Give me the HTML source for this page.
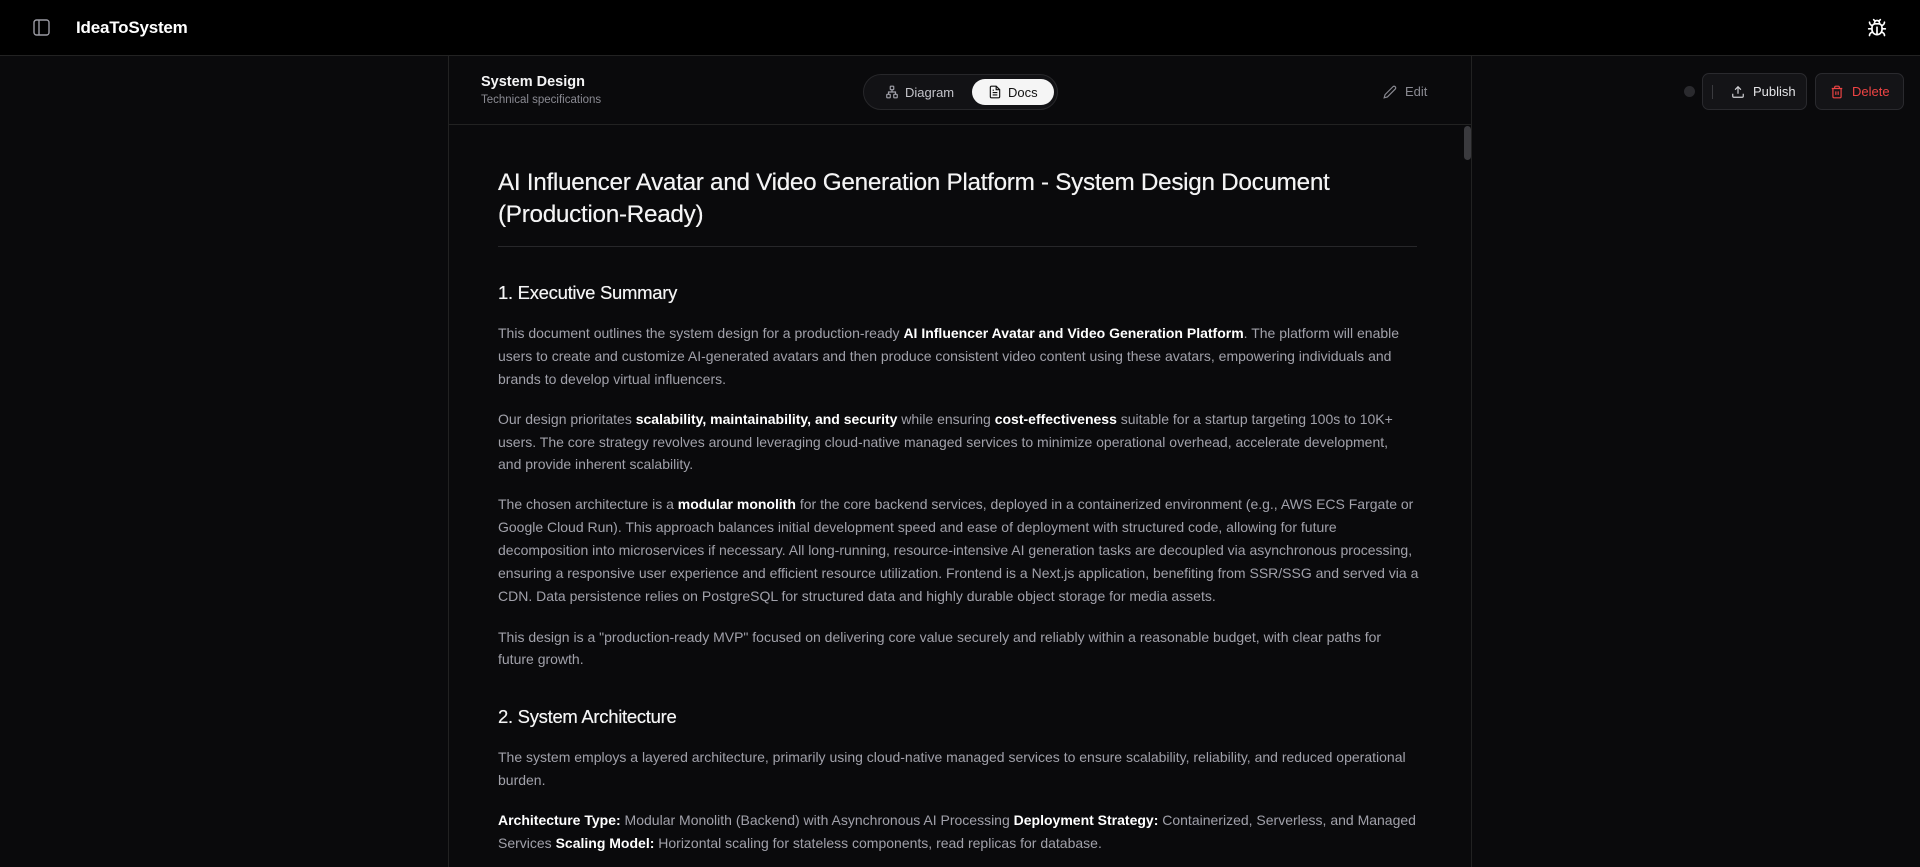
<!DOCTYPE html>
<html><head><meta charset="utf-8"><style>
*{margin:0;padding:0;box-sizing:border-box}
html,body{width:1920px;height:867px;overflow:hidden;background:#0a0a0c;font-family:"Liberation Sans",sans-serif;color:#fafafa}
.top{position:absolute;left:0;top:0;width:1920px;height:56px;background:#000;border-bottom:1px solid #222}
.logo{position:absolute;left:76px;top:18px;font-size:17px;font-weight:bold;color:#fff;letter-spacing:-0.2px}
.panel{position:absolute;left:448px;top:56px;width:1024px;height:811px;border-left:1px solid #222;border-right:1px solid #222;background:#0a0a0c}
.ph{position:absolute;left:0;top:0;width:1022px;height:69px;border-bottom:1px solid #222}
.t{position:absolute;white-space:nowrap}
.l{position:absolute;left:49px;white-space:nowrap;font-size:14px;line-height:23px;color:#a1a1aa}
.l b{color:#fff;font-weight:bold}
h1,h2{position:absolute;left:49px;white-space:nowrap;color:#f4f4f5;font-weight:normal;text-shadow:0 0 0.4px #fff}
h1{font-size:24.3px;line-height:32px;letter-spacing:-0.3px}
h2{font-size:18.5px;line-height:26px;letter-spacing:-0.3px}
.btn{position:absolute;top:73px;height:37px;border:1px solid #2a2a2e;border-radius:7px;background:#141417;font-size:13px;line-height:35px}
</style></head><body>
<div class="top">
<svg style="position:absolute;left:33px;top:19px" width="17" height="17" viewBox="0 0 17 17" fill="none" stroke="#9a9aa2" stroke-width="1.4"><rect x="1" y="1" width="15" height="15" rx="2.5"/><line x1="6" y1="1" x2="6" y2="16"/></svg>
<div class="logo">IdeaToSystem</div>
<svg style="position:absolute;left:1867px;top:18px" width="20" height="20" viewBox="0 0 24 24" fill="none" stroke="#fff" stroke-width="2" stroke-linecap="round"><path d="M8 2l1.9 1.9M16 2l-1.9 1.9M9 7.1V6a3 3 0 016 0v1.1"/><path d="M12 20c-3.3 0-6-2.7-6-6v-3a4 4 0 014-4h4a4 4 0 014 4v3c0 3.3-2.7 6-6 6zM12 20v-9M6.5 9C4.6 8.8 3 7.1 3 5M6 13H2M3 21c0-2.1 1.7-3.9 3.8-4M20.97 5c0 2.1-1.6 3.8-3.5 4M22 13h-4M17.2 17c2.1.1 3.8 1.9 3.8 4"/></svg>
</div>
<div class="panel">
<div class="ph">
<div class="t" style="left:32px;top:18px;font-size:14.5px;font-weight:bold;color:#f4f4f5">System Design</div>
<div class="t" style="left:32px;top:38px;font-size:11.5px;color:#8a8a92">Technical specifications</div>
<div style="position:absolute;left:414px;top:18px;width:195px;height:36px;border:1px solid #27272a;border-radius:18px;background:#121215"></div>
<svg style="position:absolute;left:436px;top:29px" width="14" height="14" viewBox="0 0 24 24" fill="none" stroke="#a1a1aa" stroke-width="2"><rect x="9" y="2" width="6" height="6" rx="1"/><rect x="3" y="16" width="6" height="6" rx="1"/><rect x="15" y="16" width="6" height="6" rx="1"/><path d="M12 8v4M6 16v-4h12v4"/></svg>
<div class="t" style="left:456px;top:29px;font-size:13px;color:#c4c4ca">Diagram</div>
<div style="position:absolute;left:523px;top:23px;width:82px;height:26px;border-radius:13px;background:#f5f5f5"></div>
<svg style="position:absolute;left:539px;top:29px" width="14" height="14" viewBox="0 0 24 24" fill="none" stroke="#111" stroke-width="2"><path d="M14 2H6a2 2 0 00-2 2v16a2 2 0 002 2h12a2 2 0 002-2V8z"/><path d="M14 2v6h6M8 13h8M8 17h8M8 9h2"/></svg>
<div class="t" style="left:559px;top:29px;font-size:13px;color:#111">Docs</div>
<svg style="position:absolute;left:934px;top:29px" width="14" height="14" viewBox="0 0 24 24" fill="none" stroke="#8a8a92" stroke-width="2"><path d="M17 3a2.8 2.8 0 014 4L7.5 20.5 2 22l1.5-5.5z"/></svg>
<div class="t" style="left:956px;top:28px;font-size:13px;color:#8a8a92">Edit</div>
</div>
<div style="position:absolute;left:1015px;top:70px;width:7px;height:34px;border-radius:4px;background:#3a3a3e"></div>
<h1 style="top:111px">AI Influencer Avatar and Video Generation Platform - System Design Document</h1>
<h1 style="top:143px">(Production-Ready)</h1>
<div style="position:absolute;left:49px;top:190px;width:919px;height:1px;background:#27272a"></div>
<h2 style="top:224px">1. Executive Summary</h2>
<div class="l" style="top:266px">This document outlines the system design for a production-ready <b>AI Influencer Avatar and Video Generation Platform</b>. The platform will enable</div>
<div class="l" style="top:289px">users to create and customize AI-generated avatars and then produce consistent video content using these avatars, empowering individuals and</div>
<div class="l" style="top:312px">brands to develop virtual influencers.</div>
<div class="l" style="top:352px">Our design prioritates <b>scalability, maintainability, and security</b> while ensuring <b>cost-effectiveness</b> suitable for a startup targeting 100s to 10K+</div>
<div class="l" style="top:375px">users. The core strategy revolves around leveraging cloud-native managed services to minimize operational overhead, accelerate development,</div>
<div class="l" style="top:397px">and provide inherent scalability.</div>
<div class="l" style="top:437px">The chosen architecture is a <b>modular monolith</b> for the core backend services, deployed in a containerized environment (e.g., AWS ECS Fargate or</div>
<div class="l" style="top:460px">Google Cloud Run). This approach balances initial development speed and ease of deployment with structured code, allowing for future</div>
<div class="l" style="top:483px">decomposition into microservices if necessary. All long-running, resource-intensive AI generation tasks are decoupled via asynchronous processing,</div>
<div class="l" style="top:506px">ensuring a responsive user experience and efficient resource utilization. Frontend is a Next.js application, benefiting from SSR/SSG and served via a</div>
<div class="l" style="top:529px">CDN. Data persistence relies on PostgreSQL for structured data and highly durable object storage for media assets.</div>
<div class="l" style="top:570px">This design is a "production-ready MVP" focused on delivering core value securely and reliably within a reasonable budget, with clear paths for</div>
<div class="l" style="top:592px">future growth.</div>
<h2 style="top:648px">2. System Architecture</h2>
<div class="l" style="top:690px">The system employs a layered architecture, primarily using cloud-native managed services to ensure scalability, reliability, and reduced operational</div>
<div class="l" style="top:713px">burden.</div>
<div class="l" style="top:753px"><b>Architecture Type:</b> Modular Monolith (Backend) with Asynchronous AI Processing <b>Deployment Strategy:</b> Containerized, Serverless, and Managed</div>
<div class="l" style="top:776px">Services <b>Scaling Model:</b> Horizontal scaling for stateless components, read replicas for database.</div>
</div>
<div style="position:absolute;left:1684px;top:86px;width:11px;height:11px;border-radius:50%;background:#2a2a2e"></div>
<div class="btn" style="left:1702px;width:105px;color:#e4e4e7">
<div style="position:absolute;left:9px;top:11px;width:1px;height:14px;background:#3a3a3e"></div>
<svg style="position:absolute;left:28px;top:11px" width="14" height="14" viewBox="0 0 24 24" fill="none" stroke="#d4d4d8" stroke-width="2"><path d="M21 15v4a2 2 0 01-2 2H5a2 2 0 01-2-2v-4M17 8l-5-5-5 5M12 3v12"/></svg>
<span style="position:absolute;left:50px">Publish</span></div>
<div class="btn" style="left:1815px;width:89px;color:#ef4444">
<svg style="position:absolute;left:14px;top:11px" width="14" height="14" viewBox="0 0 24 24" fill="none" stroke="#ef4444" stroke-width="2"><path d="M3 6h18M19 6v14a2 2 0 01-2 2H7a2 2 0 01-2-2V6M8 6V4a2 2 0 012-2h4a2 2 0 012 2v2M10 11v6M14 11v6"/></svg>
<span style="position:absolute;left:36px">Delete</span></div>
</body></html>
